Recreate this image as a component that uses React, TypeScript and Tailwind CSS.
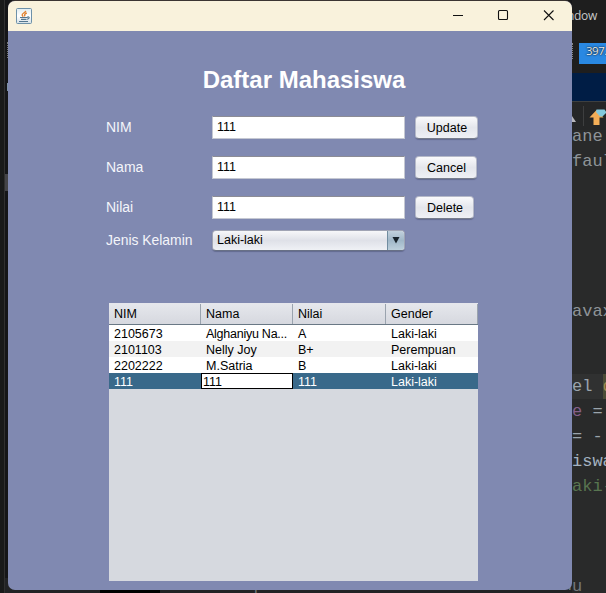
import React from "react";

const codeLines: { y: string; parts: [string, string][]; hl?: boolean }[] = [
  { y: "1", parts: [["ane", "text-[#8e9498]"]] },
  { y: "2", parts: [["faul", "text-[#8e9498]"]] },
  { y: "3", parts: [] },
  { y: "4", parts: [] },
  { y: "5", parts: [] },
  { y: "6", parts: [] },
  { y: "7", parts: [] },
  { y: "8", parts: [["avax", "text-[#8e9498]"]] },
  { y: "9", parts: [] },
  { y: "10", parts: [] },
  { y: "11", parts: [["el ", "text-[#9aa4ac]"], ["d", "text-[#a08a50] bg-[#4b4b36]"]], hl: true },
  { y: "12", parts: [["e", "text-[#85608a]"], [" =", "text-[#9aa4ac]"]] },
  { y: "13", parts: [["= -", "text-[#9aa4ac]"]] },
  { y: "14", parts: [["iswa", "text-[#a4b2c0]"]] },
  { y: "15", parts: [["aki-", "text-[#587550]"]] },
  { y: "16", parts: [] },
  { y: "17", parts: [] },
  { y: "18", parts: [] },
];

function Backdrop() {
  return (
    <div className="flex h-full w-full">
      <div className="flex w-[5px] shrink-0 flex-col border-r border-[#303030] bg-[#191a1a]" />
      <div className="flex w-[567px] shrink-0 flex-col bg-[#151618]">
        <div className="h-[42px] shrink-0" />
        <div className="ml-[2px] h-[16px] w-[3px] shrink-0 border-l border-dotted border-[#777]" />
        <div className="ml-[2px] mt-[25px] h-[8px] w-[4px] shrink-0 bg-[#7d91a7]" />
        <div className="mt-[83px] h-[17px] w-[4px] shrink-0 bg-[#444448]" />
        <div className="mt-auto flex h-[15px] shrink-0 items-center whitespace-pre bg-[#222325] pl-[205px] font-['Liberation_Mono',monospace] text-[17px] text-[#74787a]">
          <div className="-ml-[110px] h-full w-[60px] bg-black" />
          <span className="ml-[50px]">180 |</span>
          <span className="ml-auto">choose new item men</span>
        </div>
      </div>
      <div className="flex w-[34px] shrink-0 flex-col overflow-hidden bg-[#292a2a]">
        <div className="flex h-[42px] shrink-0 items-center bg-[#1e1e1e] pb-[10px] font-['Open_Sans',sans-serif] text-[12px] tracking-[-0.3px] text-[#c8c8c8]">
          <span className="-ml-[5px]">ndow</span>
        </div>
        <div className="flex h-[31px] shrink-0 items-start bg-[#1e1e1e]">
          <div className="mt-[1px] h-[16px] border-l border-dotted border-[#888]" />
          <div className="ml-[6px] mt-[1px] h-[21px] w-[28px] shrink-0 bg-[#2988e2] pl-[7px] font-['Open_Sans',sans-serif] text-[11.5px] leading-[15px] tracking-[-0.5px] text-[#e6edf5] [text-shadow:0_0_2px_#111,0_0_1px_#111]">
            397.
          </div>
        </div>
        <div className="h-[28px] shrink-0 bg-[#001d45]" />
        <div className="flex h-[29px] shrink-0 items-center border-t border-[#3d3f40] bg-[#252627]">
          <svg className="h-[28px] w-[34px]" viewBox="0 0 34 28">
            <path d="M0 14l4 6H0z" fill="#b7b7bd" />
            <path d="M11.5 4v20" stroke="#3d3e3f" />
            <path d="M17.500 15.500l7-7.500 7 7.500h-4v7.500h-6v-7.500z" fill="#f3ad57" />
            <path d="M24.500 7.500h8l2 3-4 4h-2.500l-4-4.500z" fill="#83c8dc" />
          </svg>
        </div>
        <div className="-mt-[6px] flex flex-col">
          {codeLines.map((l) => (
            <div
              key={l.y}
              className={
                "flex h-[25px] shrink-0 items-center whitespace-pre font-['Liberation_Mono',monospace] text-[17px] leading-[25px] " +
                (l.hl ? "bg-[#303131]" : "")
              }
            >
              {l.parts.map(([t, c]) => (
                <span key={t} className={c}>{t}</span>
              ))}
            </div>
          ))}
          <div className="flex h-[25px] items-center font-['Liberation_Mono',monospace] text-[17px] text-[#74787a]">u</div>
        </div>
      </div>
    </div>
  );
}

function JavaIcon() {
  return (
    <svg className="h-4 w-4" viewBox="0 0 16 16" fill="none">
      <defs>
        <linearGradient id="cup" x2="0" y2="1">
          <stop stopColor="#e1ecf0" />
          <stop offset=".5" stopColor="#fff" />
          <stop offset="1" stopColor="#d4dfe5" />
        </linearGradient>
      </defs>
      <rect x=".5" y=".5" width="15" height="15" rx="1" fill="url(#cup)" stroke="#6d91a9" />
      <path d="M9.800 2.800C9.500 5 5.500 5.200 6.200 7.200q.3 1 1.200 1.300M10.800 5C8.500 6 8.200 6.800 9 8.300" stroke="#e08333" strokeWidth="1.400" />
      <path d="M4 9.500h7.500M5 11.300h5.500M3 13.500h9" stroke="#53768f" strokeWidth="1.200" />
      <path d="M11 9.200c3-1.300 3 1.700 0 2" stroke="#53768f" strokeWidth="1.100" />
    </svg>
  );
}

const fields = [
  { label: "NIM", button: "Update", width: "w-[63px]" },
  { label: "Nama", button: "Cancel", width: "w-[62px]" },
  { label: "Nilai", button: "Delete", width: "w-[59px]" },
];

const rows = [
  ["2105673", "Alghaniyu Na...", "A", "Laki-laki"],
  ["2101103", "Nelly Joy", "B+", "Perempuan"],
  ["2202222", "M.Satria", "B", "Laki-laki"],
];

const columns = "grid grid-cols-[92px_92px_93px_92px]";

export default function App() {
  return (
    <main className="relative h-[593px] w-[606px] overflow-hidden bg-[#1b1b1b] font-['Liberation_Sans',Arial,sans-serif] text-[12.5px] text-black">
      <Backdrop />
      <section className="absolute left-[8px] top-px flex h-[589px] w-[564px] flex-col overflow-hidden rounded-[7px] bg-[#8089b1] shadow-[0_-1px_0_#3b3532]">
        <header className="flex h-[30px] shrink-0 items-center bg-[#f9f2dc] pl-[8px]">
          <JavaIcon />
          <svg className="ml-auto h-[30px] w-[125px]" viewBox="0 0 125 30" fill="none" stroke="#111" strokeWidth="1.100">
            <path d="M6 14.500h10M97 9.500l9.500 9.500M106.500 9.500L97 19" />
            <rect x="51.500" y="9.500" width="9" height="9" rx="1" />
          </svg>
        </header>
        <h1 className="mt-[33px] h-[32px] pl-[28px] text-center text-[24px] font-bold leading-[32px] text-white">Daftar Mahasiswa</h1>
        <div className="mt-[19px] flex flex-col gap-[16px] pl-[98px]">
          {fields.map((f) => (
            <div key={f.label} className="flex h-[24px] items-center">
              <label className="w-[106px] text-[14px] text-[#f4f5fa]">{f.label}</label>
              <div className="flex h-[23px] w-[193px] items-center border border-[#c5c8d2] border-t-[#8c8c95] bg-white pl-[4px] pt-px text-[12.5px]">111</div>
              <button className={"ml-[10px] flex h-[23px] items-center justify-center rounded-[4px] border border-[#b5b9c8] border-b-[#777c8b] bg-linear-to-b from-[#fafafc] via-[#e4e6ec] to-[#eff0f5] pl-px pt-[2px] text-[12.5px] shadow-[0_1px_1px_#626b90] " + f.width}>
                {f.button}
              </button>
            </div>
          ))}
        </div>
        <div className="mt-[9px] flex h-[24px] items-center pl-[98px]">
          <label className="w-[106px] text-[13.9px] text-[#f4f5fa]">Jenis Kelamin</label>
          <div className="flex h-[21px] w-[193px] items-center overflow-hidden rounded-[4px] border border-[#a0a4b4] border-b-[#687085] bg-linear-to-b from-[#f6f7f9] via-[#dfe1e8] to-[#eff1f5] pl-[4px] text-[12.5px] shadow-[0_1px_1px_#626b90]">
            <span className="pt-px">Laki-laki</span>
            <div className="ml-auto flex h-full w-[17px] items-center justify-center border-l border-[#718da0] bg-linear-to-b from-[#c2d1dd] via-[#a0b7c8] to-[#bdd0dc]">
              <svg className="h-[7px] w-[8px]" viewBox="0 0 8 7"><path d="M.5 0h7L4 6.500z" fill="#18232b" /></svg>
            </div>
          </div>
        </div>
        <div className="ml-[101px] mt-[51px] flex h-[278px] w-[369px] flex-col bg-[#d6d9df]">
          <div className={columns + " h-[22px] shrink-0 border-b border-t border-b-[#697885] border-t-[#e5e6ec] bg-linear-to-b from-[#e5e7ec] to-[#d6d8df]"}>
            {["NIM", "Nama", "Nilai", "Gender"].map((h) => (
              <div key={h} className="flex items-center border-r border-[#9aa3ae] pl-[5px] text-[12.5px]">{h}</div>
            ))}
          </div>
          <div className="flex shrink-0 flex-col bg-white">
            {rows.map((r, i) => (
              <div key={r[0]} className={columns + " h-[16px] " + (i === 1 ? "bg-[#f2f2f2]" : "bg-white")}>
                {r.map((c, j) => (
                  <div key={c} className={"whitespace-nowrap pl-[5px] leading-[19px] " + (i === 0 && j === 1 ? "tracking-[-0.25px]" : "")}>{c}</div>
                ))}
              </div>
            ))}
            <div className={columns + " h-[16px] bg-[#39698a] leading-[19px] text-white"}>
              <div className="pl-[5px]">111</div>
              <div className="h-[16px] border border-black bg-white pl-px leading-[17px] text-black">111</div>
              <div className="pl-[5px]">111</div>
              <div className="pl-[5px]">Laki-laki</div>
            </div>
          </div>
        </div>
      </section>
    </main>
  );
}
